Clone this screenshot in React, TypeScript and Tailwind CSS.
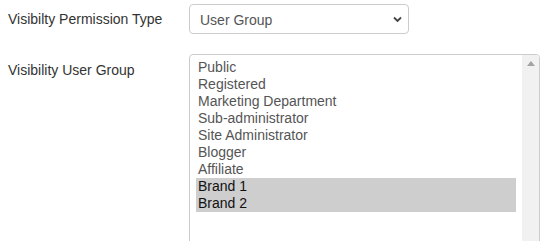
const groups = [
  { name: "Public", selected: false },
  { name: "Registered", selected: false },
  { name: "Marketing Department", selected: false },
  { name: "Sub-administrator", selected: false },
  { name: "Site Administrator", selected: false },
  { name: "Blogger", selected: false },
  { name: "Affiliate", selected: false },
  { name: "Brand 1", selected: true },
  { name: "Brand 2", selected: true },
];

export default function App() {
  return (
    <div className="w-[552px] h-[241px] overflow-hidden bg-white font-['Liberation_Sans',Arial,sans-serif] text-[14px] text-[#333]">
      <div className="pl-2 pt-1">
        {/* permission type */}
        <div className="flex">
          <label className="w-[181px] pt-[5px] leading-5">Visibilty Permission Type</label>
          <div className="relative w-[220px] h-[30px] rounded-[4px] border border-[#ccc] bg-white">
            <span className="absolute left-[10px] top-[5px] leading-5 text-[#555]">User Group</span>
            <svg className="absolute right-[6px] top-[11px]" width="9" height="7" viewBox="0 0 9 7">
              <path d="M1 1.5 L4.5 5 L8 1.5" fill="none" stroke="#444" strokeWidth="1.8" />
            </svg>
          </div>
        </div>

        {/* user group list */}
        <div className="flex mt-[20px]">
          <label className="w-[181px] pt-[6px] leading-5">Visibility User Group</label>
          <div className="flex w-[351px] h-[200px] rounded-[4px] border border-[#ccc] bg-white overflow-hidden">
            <div className="flex-1 pl-[6px] pt-[4px] pr-[6px]">
              {groups.map((g) => (
                <div
                  key={g.name}
                  className={
                    g.selected
                      ? "h-[17px] leading-[17px] px-[2px] bg-[#cecece] text-[#111]"
                      : "h-[17px] leading-[17px] px-[2px] text-[#555]"
                  }
                >
                  {g.name}
                </div>
              ))}
            </div>
            <div className="w-[17px] bg-[#f1f1f1] flex justify-center pt-[6px]">
              <svg width="8" height="5" viewBox="0 0 8 5">
                <path d="M0 5 L4 0 L8 5 Z" fill="#a3a3a3" />
              </svg>
            </div>
          </div>
        </div>
      </div>
    </div>
  );
}
